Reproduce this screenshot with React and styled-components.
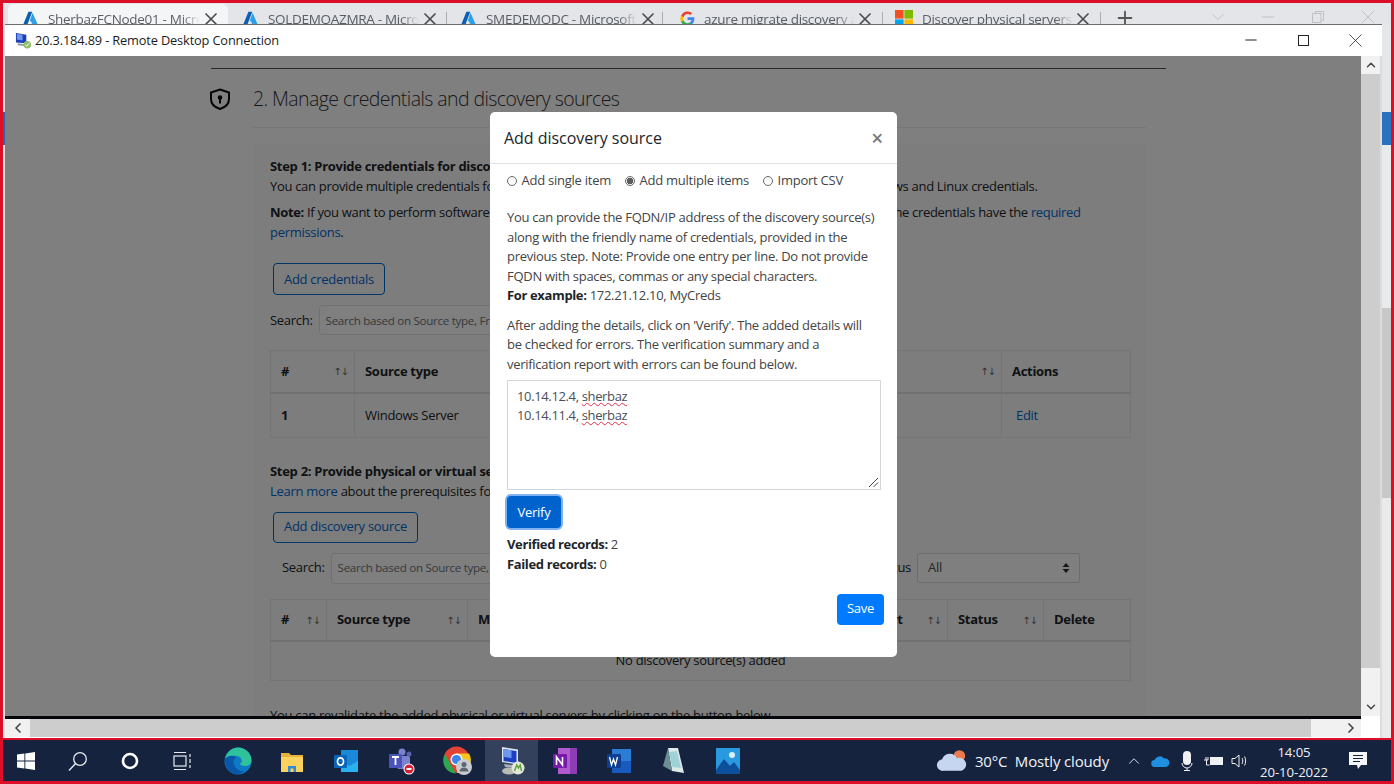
import styled, { createGlobalStyle } from "styled-components";
import { ChevronUp, ChevronDown, ChevronLeft, ChevronRight, Minus, X, Plus } from "lucide-react";

const Global = createGlobalStyle`
  html, body { margin: 0; padding: 0; background: #e0112a; }
  * { box-sizing: border-box; }
  body { font-family: "Open Sans", "Noto Sans", sans-serif; }
`;

const Screen = styled.div`
  width: 1394px;
  height: 784px;
  overflow: hidden;
  background: #dd0f28;
  padding: 3px 3px 3px 3px;
  display: flex;
  flex-direction: column;
`;

const TabStrip = styled.div`
  height: 21px;
  flex: none;
  overflow: hidden;
  background: #e3e5e8;
  display: flex;
  padding-left: 5px;
`;

const Tab = styled.div`
  width: ${(p) => p.$w}px;
  height: 29px;
  flex: none;
  margin-top: 1px;
  padding: 0 ${(p) => p.$pr}px 0 ${(p) => p.$pad}px;
  display: flex;
  align-items: center;
  gap: ${(p) => p.$gap}px;
  border-radius: 6px 6px 0 0;
  background: ${(p) => (p.$active ? "#f4f5f6" : "transparent")};
  position: relative;
  color: #5a5e66;
  font-size: 13.5px;
  letter-spacing: -0.3px;

  &::after {
    content: "";
    display: ${(p) => (p.$active ? "none" : "block")};
    position: absolute;
    right: 0;
    top: 8px;
    height: 16px;
    width: 1px;
    background: #a9adb3;
  }
`;

const TabLabel = styled.span`
  flex: 1;
  min-width: 0;
  white-space: nowrap;
  overflow: hidden;
  mask-image: linear-gradient(to right, #000 88%, transparent);
`;

const TabClose = styled(X)`
  flex: none;
  margin-left: -9px;
  color: #4a4d52;
`;

const NewTab = styled.div`
  width: 48px;
  display: flex;
  justify-content: center;
  align-items: center;
  color: #555;
  height: 29px;
`;

const BrowserControls = styled.div`
  flex: 1;
  display: flex;
  justify-content: flex-end;
  align-items: center;
  gap: 26px;
  color: #bfc1c5;
  height: 27px;
  padding-right: 11px;
`;

const BrowserControl = styled.div`
  width: 24px;
  display: flex;
  justify-content: center;
`;

const Middle = styled.div`
  height: 714px;
  flex: none;
  display: flex;
`;

const LeftSliver = styled.div`
  width: 2px;
  background: linear-gradient(
    to bottom,
    #dfe1e4 0 88px,
    #2a63a8 88px 121px,
    #e8e8e8 121px
  );
`;

const RightSliver = styled.div`
  width: 9px;
  background: linear-gradient(
    to bottom,
    #e6e7e9 0 88px,
    #2a72bd 88px 121px,
    #e9eaeb 121px 284px,
    #c8c8c8 284px 474px,
    #eaeaea 474px
  );
`;

const RdpWindow = styled.div`
  width: 1377px;
  display: flex;
  flex-direction: column;
  background: #fff;
  border-top: 1px solid #6d6d6d;
`;

const TitleBar = styled.div`
  height: 31px;
  flex: none;
  display: flex;
  align-items: center;
  padding-left: 10px;
  gap: 3px;
  font-size: 12.8px;
  letter-spacing: -0.15px;
  color: #1c1c1c;
`;

const TitleText = styled.span`
  flex: 1;
  margin-top: -2px;
`;

const WinButton = styled.div`
  width: 52px;
  height: 24px;
  display: flex;
  justify-content: center;
  align-items: center;
  color: #222;
`;

const WinButtons = styled.div`
  display: flex;
  align-items: center;
  padding-right: 1px;
  margin-top: -1px;
`;

const RdpBody = styled.div`
  flex: 1;
  min-height: 0;
  display: flex;
`;

const RemoteColumn = styled.div`
  width: 1356px;
  display: flex;
  flex-direction: column;
`;

const Viewport = styled.div`
  height: 660px;
  flex: none;
  position: relative;
  overflow: hidden;
  background: #fff;
  padding: 12px 0 0 206px;
  font-size: 13px;
  line-height: 19.6px;
  color: #212529;
  letter-spacing: -0.29px;
`;

const BlackBar = styled.div`
  height: 3px;
  flex: none;
  background: #05060a;
`;

const HScroll = styled.div`
  height: 18px;
  flex: none;
  display: flex;
  align-items: center;
  background: #f1f1f1;
  color: #555;
`;

const HThumb = styled.div`
  width: 1281px;
  height: 100%;
  background: #cdcdcd;
`;

const ScrollArrow = styled.div`
  width: ${(p) => p.$w || 20}px;
  height: 18px;
  flex: none;
  display: flex;
  justify-content: center;
  align-items: center;
  color: #444;
`;

const VScroll = styled.div`
  width: 19px;
  flex: none;
  background: #f1f1f1;
  display: flex;
  flex-direction: column;
  height: 660px;
`;

const VThumb = styled.div`
  width: 100%;
  height: 594px;
  background: #cdcdcd;
`;

const VSpacer = styled.div`
  flex: 1;
`;

const WindowEdge = styled.div`
  width: 2px;
  background: #dcdcdc;
`;

/* page behind the dialog */
const TopRule = styled.div`
  width: 955px;
  height: 1px;
  background: #555;
`;

const SectionHead = styled.div`
  display: flex;
  align-items: center;
  height: 57px;
  width: 935px;
  gap: 21px;
  margin-left: -3px;
  margin-top: 1px;
`;

const SectionTitle = styled.h2`
  margin: 0;
  font-size: 19.5px;
  font-weight: 300;
  letter-spacing: -0.58px;
  color: #333;
  line-height: 28px;
`;

const SectionBody = styled.div`
  margin-left: 42px;
  width: 893px;
  border-top: 1px solid #eee;
`;

const Card = styled.div`
  margin-top: 15px;
  padding: 14px 15px 0 17px;
  background: #fbfbfb;
  height: 600px;
`;

const Line = styled.div`
  white-space: nowrap;
  margin-top: ${(p) => p.$mt || 0}px;
  letter-spacing: ${(p) => p.$ls || "inherit"};
`;

const Link = styled.span`
  color: #0066cc;
`;

const EditLink = styled(Link)`
  padding-left: 4px;
`;

const OutlineButton = styled.div`
  display: inline-flex;
  align-items: center;
  height: ${(p) => p.$h}px;
  margin: ${(p) => p.$mt}px 0 0 3px;
  padding: 0 10px;
  border: 1px solid #0066cc;
  border-radius: 4px;
  color: #0066cc;
  font-size: 13px;
`;

const SearchRow = styled.div`
  display: flex;
  align-items: center;
  gap: 6px;
  margin-top: 10px;
  padding-left: ${(p) => p.$left || 0}px;
  padding-right: ${(p) => p.$right || 0}px;
`;

const SearchInput = styled.div`
  width: ${(p) => p.$w}px;
  height: ${(p) => p.$h}px;
  border: 1px solid #dfe2e5;
  border-radius: 3px;
  padding: 0 6px;
  display: flex;
  align-items: center;
  color: #6c757d;
  font-size: 11.6px;
  white-space: nowrap;
  overflow: hidden;
  background: #fff;
`;

const StatusLabel = styled.span`
  margin-left: auto;
`;

const FilterSelect = styled.div`
  width: 163px;
  height: 30px;
  border: 1px solid #d5d8dc;
  border-radius: 3px;
  padding: 0 10px;
  display: flex;
  align-items: center;
  justify-content: space-between;
  color: #495057;
  background: #fff;
`;

const SelectArrows = styled.svg`
  width: 8px;
  height: 12px;
  margin-right: -1px;
`;

const Table = styled.table`
  width: 860px;
  table-layout: fixed;
  border-collapse: collapse;
  margin-top: 15px;
`;

const Th = styled.th`
  width: ${(p) => p.$w}px;
  height: 42px;
  padding: 0 10px;
  text-align: left;
  font-weight: 700;
  border: 1px solid #e9ebed;
  border-bottom: 2px solid #dee2e6;
  position: relative;
  white-space: nowrap;
  overflow: hidden;
`;

const Td = styled.td`
  height: ${(p) => p.$h}px;
  padding: 0 10px;
  border: 1px solid #e9ebed;
  font-weight: ${(p) => (p.$bold ? 700 : 400)};
  text-align: ${(p) => (p.$center ? "center" : "left")};
`;

const SortMark = styled.span`
  position: absolute;
  right: 6px;
  top: 11px;
  color: #666;
  font-size: 10px;
  font-weight: 400;
  letter-spacing: -1px;
  font-family: "DejaVu Sans", sans-serif;
`;

/* dialog */
const Backdrop = styled.div`
  position: absolute;
  inset: 0;
  background: rgba(0, 0, 0, 0.5);
  padding: 56px 0 0 485px;
`;

const Modal = styled.div`
  width: 407px;
  height: 545px;
  background: #fff;
  border-radius: 5px;
  color: #212529;
`;

const ModalHeader = styled.div`
  height: 52px;
  padding: 2px 14px 0;
  border-bottom: 1px solid #dee2e6;
  display: flex;
  align-items: center;
  justify-content: space-between;
`;

const ModalTitle = styled.div`
  font-size: 16px;
  font-weight: 500;
  letter-spacing: -0.03px;
`;

const CloseMark = styled.span`
  font-size: 21px;
  font-weight: 600;
  color: #7b7b7b;
  line-height: 1;
`;

const ModalBody = styled.div`
  padding: 7px 16px 0 17px;
`;

const RadioRow = styled.div`
  display: flex;
  align-items: center;
  color: #444;
  margin-bottom: 17.5px;
  letter-spacing: -0.25px;
`;

const RadioItem = styled.label`
  display: flex;
  align-items: center;
  gap: 4.5px;
  margin-right: 14px;
  white-space: nowrap;
`;

const RadioDot = styled.span`
  width: 10px;
  height: 10px;
  border-radius: 50%;
  border: 1px solid #6a6a6a;
  background: ${(p) => (p.$on ? "radial-gradient(circle, #5c5c5c 0 3px, #fff 3.6px)" : "#fff")};
`;

const Para = styled.p`
  margin: 0 0 9.5px;
  color: #444;
  white-space: nowrap;
`;

const Strong = styled.b`
  color: #212529;
  font-weight: 700;
  letter-spacing: -0.36px;
`;

const Entries = styled.div`
  width: 374px;
  height: 110px;
  margin-top: -3.5px;
  border: 1px solid #d4d7da;
  padding: 5.5px 9px;
  position: relative;
  color: #495057;
  letter-spacing: -0.36px;
`;

const Misspelt = styled.span`
  text-decoration: underline wavy #e0304a 1px;
  text-underline-offset: 1px;
`;

const ResizeGrip = styled.svg`
  position: absolute;
  right: 1px;
  bottom: 1px;
  width: 12px;
  height: 12px;
`;

const VerifyButton = styled.button`
  display: block;
  width: 54px;
  height: 32px;
  margin-top: 6px;
  border: none;
  border-radius: 4px;
  background: #0062cc;
  color: #fff;
  font: inherit;
  letter-spacing: inherit;
  padding: 0;
  box-shadow: 0 0 0 2px #7fb3f0;
`;

const Record = styled.div`
  color: #444;
  margin-top: ${(p) => p.$mt || 0}px;
`;

const ModalFooter = styled.div`
  display: flex;
  justify-content: flex-end;
  margin: 19px -3px 0 0;
`;

const SaveButton = styled.button`
  width: 47px;
  height: 31px;
  border: none;
  border-radius: 4px;
  background: #007bff;
  color: #fff;
  font: inherit;
  letter-spacing: inherit;
  padding: 0;
`;

/* taskbar */
const Taskbar = styled.div`
  height: 41px;
  flex: none;
  margin-top: 2px;
  padding-right: 9px;
  background: #15233f;
  display: flex;
  align-items: center;
  color: #f2f4f7;
`;

const TaskSlot = styled.div`
  width: ${(p) => p.$w || 54}px;
  height: 41px;
  flex: none;
  display: flex;
  align-items: center;
  justify-content: center;
  background: ${(p) => (p.$active ? "#34415c" : "transparent")};
`;

const Weather = styled.div`
  margin-left: auto;
  display: flex;
  align-items: center;
  gap: 6px;
  font-size: 15px;
  letter-spacing: -0.15px;
  white-space: nowrap;
`;

const Tray = styled.div`
  display: flex;
  align-items: center;
  margin-left: 12px;
`;

const Clock = styled.div`
  width: 80px;
  margin-left: 1px;
  padding-top: 3px;
  text-align: center;
  font-size: 13.2px;
  line-height: 20px;
  color: #eef0f4;
  letter-spacing: -0.1px;
`;

const TabIcon = styled.svg`
  flex: none;
`;

const AzureIcon = () => (
  <TabIcon width="15" height="15" viewBox="0 0 18 16">
    <path d="M6.5 0h4.6L5 16H0z" fill="#0a5fb4" />
    <path d="M11.5 1 18 16H6.8l4.4-2.2-3-3.4z" fill="#2ea0e8" />
  </TabIcon>
);

const GoogleIcon = () => (
  <TabIcon width="15" height="15" viewBox="0 0 24 24">
    <path d="M23 12.3c0-.8-.1-1.600-.2-2.300H12v4.400h6.200a5.300 5.300 0 0 1-2.300 3.500v2.900h3.700c2.200-2 3.400-5 3.400-8.500z" fill="#4285f4" />
    <path d="M12 24c3.100 0 5.700-1 7.600-2.800l-3.700-2.900c-1 .7-2.300 1.100-3.900 1.100-3 0-5.500-2-6.400-4.700H1.800v3C3.800 21.500 7.600 24 12 24z" fill="#34a853" />
    <path d="M5.600 14.700a7.200 7.200 0 0 1 0-4.600v-3H1.800a12 12 0 0 0 0 10.600z" fill="#fbbc05" />
    <path d="M12 4.800c1.700 0 3.200.6 4.400 1.700l3.300-3.300A12 12 0 0 0 1.800 7.100l3.800 3c.9-2.700 3.400-5.300 6.400-5.300z" fill="#ea4335" />
  </TabIcon>
);

const MsIcon = () => (
  <TabIcon width="18" height="18" viewBox="0 0 18 18">
    <rect width="8.600" height="8.600" fill="#f25022" />
    <rect x="9.400" width="8.600" height="8.600" fill="#7fba00" />
    <rect y="9.400" width="8.600" height="8.600" fill="#00a4ef" />
    <rect x="9.400" y="9.400" width="8.600" height="8.600" fill="#ffb900" />
  </TabIcon>
);

const RdpIcon = ({ size = 17 }) => (
  <svg width={size} height={size} viewBox="0 0 18 18">
    <path d="M1 1l11 2v9L1 11z" fill="#1c3fb8" />
    <path d="M2 2l6 1v6L2 8z" fill="#6f95ea" />
    <path d="M3 12l8 1 1 2-9-1z" fill="#8d97a8" />
    <circle cx="13" cy="13.500" r="4" fill="#8fbf6c" />
    <path d="M11 13.500l1.500 1.500 2.500-3" fill="none" stroke="#fff" strokeWidth="1" />
  </svg>
);

const ShieldIcon = () => (
  <svg width="24" height="24" viewBox="0 0 24 24">
    <path d="M12 2.500 21 5.500v6.500c0 5-3.600 8.300-9 10-5.400-1.700-9-5-9-10V5.500z" fill="none" stroke="#0b0b0b" strokeWidth="2" />
    <circle cx="12" cy="10.500" r="2.300" fill="#0b0b0b" />
    <rect x="11" y="11" width="2" height="5.500" fill="#0b0b0b" />
  </svg>
);

const icons = {
  windows: (
    <svg width="18" height="18" viewBox="0 0 18 18">
      <path d="M0 2.600 7.400 1.500v7H0zM8.300 1.400 18 0v8.500H8.300zM0 9.400h7.400v7.100L0 15.400zM8.300 9.400H18V18l-9.700-1.400z" fill="#fff" />
    </svg>
  ),
  search: (
    <svg width="20" height="20" viewBox="0 0 20 20">
      <circle cx="12" cy="8" r="6.300" fill="none" stroke="#e8ebf0" strokeWidth="1.300" />
      <path d="M7.600 12.600 1 19.500" stroke="#e8ebf0" strokeWidth="1.400" />
    </svg>
  ),
  cortana: (
    <svg width="18" height="18" viewBox="0 0 18 18">
      <circle cx="9" cy="9" r="7" fill="none" stroke="#fff" strokeWidth="2.600" />
    </svg>
  ),
  taskview: (
    <svg width="20" height="20" viewBox="0 0 20 20" fill="none" stroke="#e8ebf0" strokeWidth="1.200">
      <rect x="2" y="5" width="12" height="10" />
      <path d="M2 1.500h12M2 18.500h12M18 3v3M18 8v4M18 14v3" />
    </svg>
  ),
  edge: (
    <svg width="28" height="28" viewBox="0 0 28 28">
      <circle cx="14" cy="14" r="13.500" fill="#0c7bc4" />
      <path d="M1 12C3 4 9 .500 14 .500c7 0 13.500 5.500 13.500 13 0 3.500-3 5.500-6.500 5.500-3 0-5-1-5-2.500 3-1 2.500-6.500-3-7.500C8 8.500 3 9 1 12z" fill="#2fc09c" />
      <path d="M9.500 14c0 6 5 11 11 10a13 13 0 0 1-7.500 3.500C6 27.500.500 21 1 12c2-3 9-5 11-1-1.500.500-2.500 1.500-2.500 3z" fill="#0a56a8" />
    </svg>
  ),
  files: (
    <svg width="26" height="26" viewBox="0 0 26 26">
      <path d="M2 5h8l2 2h12v4H2z" fill="#e8b23a" />
      <rect x="2" y="9" width="22" height="15" fill="#fbd25c" />
      <path d="M9 24v-6h8v6h-2.500v-3.500h-3V24z" fill="#2f8bd2" />
    </svg>
  ),
  outlook: (
    <svg width="26" height="26" viewBox="0 0 26 26">
      <rect x="8" y="2" width="17" height="22" fill="#1a8ad8" />
      <path d="M8 13l8.500 5L25 13v11H8z" fill="#29b2ef" />
      <rect x="1" y="7" width="13" height="13" rx="1" fill="#0a64b8" />
      <ellipse cx="7.500" cy="13.500" rx="3" ry="3.700" fill="none" stroke="#fff" strokeWidth="1.700" />
    </svg>
  ),
  teams: (
    <svg width="28" height="28" viewBox="0 0 28 28">
      <circle cx="14" cy="5" r="3.500" fill="#7b83d0" />
      <circle cx="21" cy="7" r="2.500" fill="#5a62b4" />
      <rect x="9" y="9" width="13" height="13" rx="2" fill="#7b83d0" />
      <rect x="1" y="7" width="13" height="14" rx="1" fill="#4b53bc" />
      <path d="M4 10h7M7.500 10v8" stroke="#fff" strokeWidth="1.800" />
      <circle cx="21" cy="22" r="5.500" fill="#fff" />
      <circle cx="21" cy="22" r="4.500" fill="#d12239" />
      <rect x="18.500" y="21" width="5" height="2" fill="#fff" />
    </svg>
  ),
  chrome: (
    <svg width="30" height="30" viewBox="0 0 30 30">
      <circle cx="13.500" cy="13.500" r="13" fill="#e24334" />
      <path d="M2 8 8 19l5 8.500A13 13 0 0 1 2 8z" fill="#2ca84f" />
      <path d="M13.500 7.500H26a13 13 0 0 1-12.500 19.500L19 18z" fill="#f5c51c" />
      <circle cx="13.500" cy="13.500" r="6" fill="#fff" />
      <circle cx="13.500" cy="13.500" r="4.600" fill="#3d83ea" />
      <circle cx="21" cy="21" r="8" fill="#c7ccd3" />
      <circle cx="21" cy="18.500" r="2.500" fill="#5f6670" />
      <path d="M16.500 25.500c.5-3 2-4 4.500-4s4 1 4.500 4z" fill="#5f6670" />
    </svg>
  ),
  rdp: (
    <svg width="28" height="30" viewBox="0 0 28 30">
      <path d="M4 1l16 2.500v15L4 16z" fill="#dfe6f3" />
      <path d="M5.500 3l13 2v12l-13-2z" fill="#1a3fc4" />
      <path d="M5.500 3l8 1.200v8l-8-1.500z" fill="#6e98ee" />
      <path d="M6 18l14 1.500 2 3-15-1.500z" fill="#a8adb7" />
      <ellipse cx="11" cy="25" rx="7" ry="3.500" fill="#b7bbb3" />
      <circle cx="20" cy="22" r="6.500" fill="#e3e8d8" />
      <path d="M16.500 25l2.300-6 1.700 3 1.700-3 1.300 6" fill="none" stroke="#5ba03b" strokeWidth="1.400" />
    </svg>
  ),
  onenote: (
    <svg width="26" height="28" viewBox="0 0 26 28">
      <rect x="6" y="1" width="19" height="26" fill="#b15ad0" />
      <rect x="18" y="1" width="7" height="26" fill="#8e3cb4" />
      <rect x="1" y="7" width="14" height="14" rx="1" fill="#7719aa" />
      <path d="M4.500 18v-8l6 8v-8" fill="none" stroke="#fff" strokeWidth="1.600" />
    </svg>
  ),
  word: (
    <svg width="26" height="28" viewBox="0 0 26 28">
      <rect x="6" y="2" width="19" height="24" fill="#2b7cd3" />
      <rect x="6" y="14" width="19" height="12" fill="#185abd" />
      <rect x="1" y="7" width="14" height="14" rx="1" fill="#103f91" />
      <path d="M3.500 10l2 8 2-6 2 6 2-8" fill="none" stroke="#fff" strokeWidth="1.300" />
    </svg>
  ),
  notepad: (
    <svg width="26" height="30" viewBox="0 0 26 30">
      <path d="M8 2h10l6 25-12-2z" fill="#dfe8e8" />
      <path d="M9 6l8-1 4 17-9-1z" fill="#9fd2d8" />
      <path d="M8 2 3 20l9 5z" fill="#6e8f92" />
    </svg>
  ),
  photos: (
    <svg width="26" height="30" viewBox="0 0 26 30">
      <rect x="1" y="2" width="24" height="26" fill="#2a9ae0" />
      <circle cx="17" cy="9" r="3" fill="#d8f0fb" />
      <path d="M1 24l8-11 6 7 4-4 6 8v4H1z" fill="#0d4f9a" />
    </svg>
  ),
};

const taskApps = [
  ["windows", 46],
  ["search", 58],
  ["cortana", 46],
  ["taskview", 58],
  ["edge", 54],
  ["files", 54],
  ["outlook", 54],
  ["teams", 58],
  ["chrome", 54],
  ["rdp", 53, true],
  ["onenote", 54],
  ["word", 54],
  ["notepad", 54],
  ["photos", 56],
];

const browserTabs = [
  { id: 1, icon: <AzureIcon />, label: "SherbazFCNode01 - Microsoft Azure", w: 220, pad: 15, gap: 10, pr: 7, active: true },
  { id: 2, icon: <AzureIcon />, label: "SQLDEMOAZMRA - Microsoft Azure", w: 219, pad: 15, gap: 10, pr: 7 },
  { id: 3, icon: <AzureIcon />, label: "SMEDEMODC - Microsoft Azure", w: 216, pad: 14, gap: 10, pr: 5 },
  { id: 4, icon: <GoogleIcon />, label: "azure migrate discovery appliance", w: 220, pad: 17, gap: 9, pr: 8 },
  { id: 5, icon: <MsIcon />, label: "Discover physical servers with Azure", w: 218, pad: 12, gap: 9, pr: 8 },
];

const Sort = () => <SortMark>↑↓</SortMark>;

export default function App() {
  return (
    <>
      <Global />
      <Screen>
        <TabStrip>
          {browserTabs.map((t) => (
            <Tab key={t.id} $w={t.w} $pad={t.pad} $gap={t.gap} $pr={t.pr} $active={t.active}>
              {t.icon}
              <TabLabel>{t.label}</TabLabel>
              <TabClose size={20} strokeWidth={2} />
            </Tab>
          ))}
          <NewTab><Plus size={22} strokeWidth={2} /></NewTab>
          <BrowserControls>
            <BrowserControl><ChevronDown size={20} strokeWidth={1.2} /></BrowserControl>
            <BrowserControl><Minus size={20} strokeWidth={1.2} /></BrowserControl>
            <BrowserControl>
              <svg width="12" height="12" viewBox="0 0 12 12" fill="none" stroke="currentColor">
                <path d="M3.500 2.500V.5h8v9H9" />
                <rect x=".5" y="2.500" width="8.500" height="9" />
              </svg>
            </BrowserControl>
            <BrowserControl><X size={24} strokeWidth={1} /></BrowserControl>
          </BrowserControls>
        </TabStrip>

        <Middle>
          <LeftSliver />
          <RdpWindow>
            <TitleBar>
              <RdpIcon />
              <TitleText>20.3.184.89 - Remote Desktop Connection</TitleText>
              <WinButtons>
                <WinButton><Minus size={18} strokeWidth={1.4} /></WinButton>
                <WinButton>
                  <svg width="11" height="11" viewBox="0 0 11 11">
                    <rect x=".5" y=".5" width="10" height="10" fill="none" stroke="#222" />
                  </svg>
                </WinButton>
                <WinButton><X size={23} strokeWidth={0.8} /></WinButton>
              </WinButtons>
            </TitleBar>
            <RdpBody>
              <RemoteColumn>
                <Viewport>
                  <TopRule />
                  <SectionHead>
                    <ShieldIcon />
                    <SectionTitle>2. Manage credentials and discovery sources</SectionTitle>
                  </SectionHead>
                  <SectionBody>
                    <Card>
                      <Line><b>Step 1: Provide credentials for discovery of Windows and Linux servers</b></Line>
                      <Line $ls="-0.312px">You can provide multiple credentials for discovery of Windows and Linux servers. Please provide both Windows and Linux credentials.</Line>
                      <Line $mt={7} $ls="-0.33px"><b>Note:</b> If you want to perform software inventory and agentless dependency analysis on servers, ensure that the credentials have the <Link>required</Link></Line>
                      <Line><Link>permissions</Link>.</Line>
                      <OutlineButton $h={32} $mt={21}>Add credentials</OutlineButton>
                      <SearchRow>
                        <span>Search:</span>
                        <SearchInput $w={500} $h={30}>Search based on Source type, Friendly name, Username</SearchInput>
                      </SearchRow>
                      <Table>
                        <thead>
                          <tr>
                            <Th $w={84}># <Sort /></Th>
                            <Th $w={200}>Source type</Th>
                            <Th $w={250}>Friendly name</Th>
                            <Th $w={197}>Username <Sort /></Th>
                            <Th $w={129}>Actions</Th>
                          </tr>
                        </thead>
                        <tbody>
                          <tr>
                            <Td $h={45} $bold>1</Td>
                            <Td $h={45}>Windows Server</Td>
                            <Td $h={45}>sherbaz</Td>
                            <Td $h={45}>sherbaz</Td>
                            <Td $h={45}><EditLink>Edit</EditLink></Td>
                          </tr>
                        </tbody>
                      </Table>
                      <Line $mt={24}><b>Step 2: Provide physical or virtual server details</b></Line>
                      <Line><Link>Learn more</Link> about the prerequisites for discovery of servers</Line>
                      <OutlineButton $h={31} $mt={10}>Add discovery source</OutlineButton>
                      <SearchRow $left={12} $right={51}>
                        <span>Search:</span>
                        <SearchInput $w={500} $h={31}>Search based on Source type, Machine name</SearchInput>
                        <StatusLabel>Status</StatusLabel>
                        <FilterSelect>
                          All
                          <SelectArrows viewBox="0 0 8 12">
                            <path d="M4 1 7.500 5H.5zM4 11 .5 7h7z" fill="#333" />
                          </SelectArrows>
                        </FilterSelect>
                      </SearchRow>
                      <Table>
                        <thead>
                          <tr>
                            <Th $w={56}># <Sort /></Th>
                            <Th $w={141}>Source type <Sort /></Th>
                            <Th $w={213}>Machine IP/FQDN</Th>
                            <Th $w={185}>Friendly name</Th>
                            <Th $w={82}>Port <Sort /></Th>
                            <Th $w={96}>Status <Sort /></Th>
                            <Th $w={87}>Delete</Th>
                          </tr>
                        </thead>
                        <tbody>
                          <tr>
                            <Td $h={39} $center colSpan={7}>No discovery source(s) added</Td>
                          </tr>
                        </tbody>
                      </Table>
                      <Line $mt={25}>You can revalidate the added physical or virtual servers by clicking on the button below.</Line>
                    </Card>
                  </SectionBody>

                  <Backdrop>
                    <Modal>
                      <ModalHeader>
                        <ModalTitle>Add discovery source</ModalTitle>
                        <CloseMark>×</CloseMark>
                      </ModalHeader>
                      <ModalBody>
                        <RadioRow>
                          <RadioItem><RadioDot />Add single item</RadioItem>
                          <RadioItem><RadioDot $on />Add multiple items</RadioItem>
                          <RadioItem><RadioDot />Import CSV</RadioItem>
                        </RadioRow>
                        <Para>
                          You can provide the FQDN/IP address of the discovery source(s)<br />
                          along with the friendly name of credentials, provided in the<br />
                          previous step. Note: Provide one entry per line. Do not provide<br />
                          FQDN with spaces, commas or any special characters.<br />
                          <Strong>For example:</Strong> 172.21.12.10, MyCreds
                        </Para>
                        <Para>
                          After adding the details, click on 'Verify'. The added details will<br />
                          be checked for errors. The verification summary and a<br />
                          verification report with errors can be found below.
                        </Para>
                        <Entries>
                          <div>10.14.12.4, <Misspelt>sherbaz</Misspelt></div>
                          <div>10.14.11.4, <Misspelt>sherbaz</Misspelt></div>
                          <ResizeGrip viewBox="0 0 12 12">
                            <path d="M2 11 11 2M6.500 11 11 6.500" stroke="#444" strokeWidth="1" />
                          </ResizeGrip>
                        </Entries>
                        <VerifyButton>Verify</VerifyButton>
                        <Record $mt={7}><Strong>Verified records:</Strong> 2</Record>
                        <Record><Strong>Failed records:</Strong> 0</Record>
                        <ModalFooter>
                          <SaveButton>Save</SaveButton>
                        </ModalFooter>
                      </ModalBody>
                    </Modal>
                  </Backdrop>
                </Viewport>
                <BlackBar />
                <HScroll>
                  <ScrollArrow $w={25}><ChevronLeft size={16} strokeWidth={2.5} /></ScrollArrow>
                  <HThumb />
                  <VSpacer />
                  <ScrollArrow><ChevronRight size={16} strokeWidth={2.5} /></ScrollArrow>
                </HScroll>
              </RemoteColumn>
              <VScroll>
                <ScrollArrow $w={19}><ChevronUp size={14} strokeWidth={2.5} /></ScrollArrow>
                <VThumb />
                <VSpacer />
                <ScrollArrow $w={19}><ChevronDown size={14} strokeWidth={2.5} /></ScrollArrow>
              </VScroll>
              <WindowEdge />
            </RdpBody>
          </RdpWindow>
          <RightSliver />
        </Middle>

        <Taskbar>
          {taskApps.map(([name, w, active]) => (
            <TaskSlot key={name} $w={w} $active={active}>{icons[name]}</TaskSlot>
          ))}
          <Weather>
            <svg width="33" height="23" viewBox="0 0 28 20">
              <circle cx="20" cy="6" r="5" fill="#ee7a4e" />
              <path d="M6 19a5 5 0 0 1-1-10 7 7 0 0 1 13-1 5.500 5.500 0 0 1 4 11z" fill="#c6d6f0" />
            </svg>
            30°C&nbsp;&nbsp;Mostly cloudy
          </Weather>
          <Tray>
            <TaskSlot $w={26}><ChevronUp size={18} strokeWidth={1.2} /></TaskSlot>
            <TaskSlot $w={26}>
              <svg width="19" height="12" viewBox="0 0 19 12">
                <path d="M4 12a3.500 3.500 0 0 1-.5-7A5.500 5.500 0 0 1 13 3.500 4.300 4.300 0 0 1 15 12z" fill="#1f8fe0" />
              </svg>
            </TaskSlot>
            <TaskSlot $w={27}>
              <svg width="12" height="20" viewBox="0 0 12 20">
                <rect x="2" y="0" width="8" height="14" rx="4" fill="#eef0f4" />
                <path d="M1 12a5 5 0 0 0 10 0M6 17v2M3 19.500h6" stroke="#eef0f4" strokeWidth="1" fill="none" />
              </svg>
            </TaskSlot>
            <TaskSlot $w={27}>
              <svg width="20" height="12" viewBox="0 0 20 12">
                <rect x="6" y="2" width="13" height="8" fill="#eef0f4" />
                <path d="M0 5h4M2 2v3M4 2v3M2.500 5v5h3" stroke="#eef0f4" strokeWidth="1" fill="none" />
              </svg>
            </TaskSlot>
            <TaskSlot $w={26}>
              <svg width="18" height="16" viewBox="0 0 18 16" fill="none" stroke="#eef0f4" strokeWidth="1">
                <path d="M1 5.500h3L8 2v12L4 10.500H1zM11 5c1 1.500 1 4.500 0 6M13.500 3.500c1.500 2.500 1.500 6.500 0 9" />
              </svg>
            </TaskSlot>
          </Tray>
          <Clock>14:05<br />20-10-2022</Clock>
          <TaskSlot $w={48}>
            <svg width="20" height="19" viewBox="0 0 20 19">
              <path d="M1 1h18v13h-6l-3 4-1-4H1z" fill="#f5f6f8" />
              <path d="M5 4.500h10M5 7.500h10M5 10.500h7" stroke="#15233f" strokeWidth="1" />
            </svg>
          </TaskSlot>
        </Taskbar>
      </Screen>
    </>
  );
}
